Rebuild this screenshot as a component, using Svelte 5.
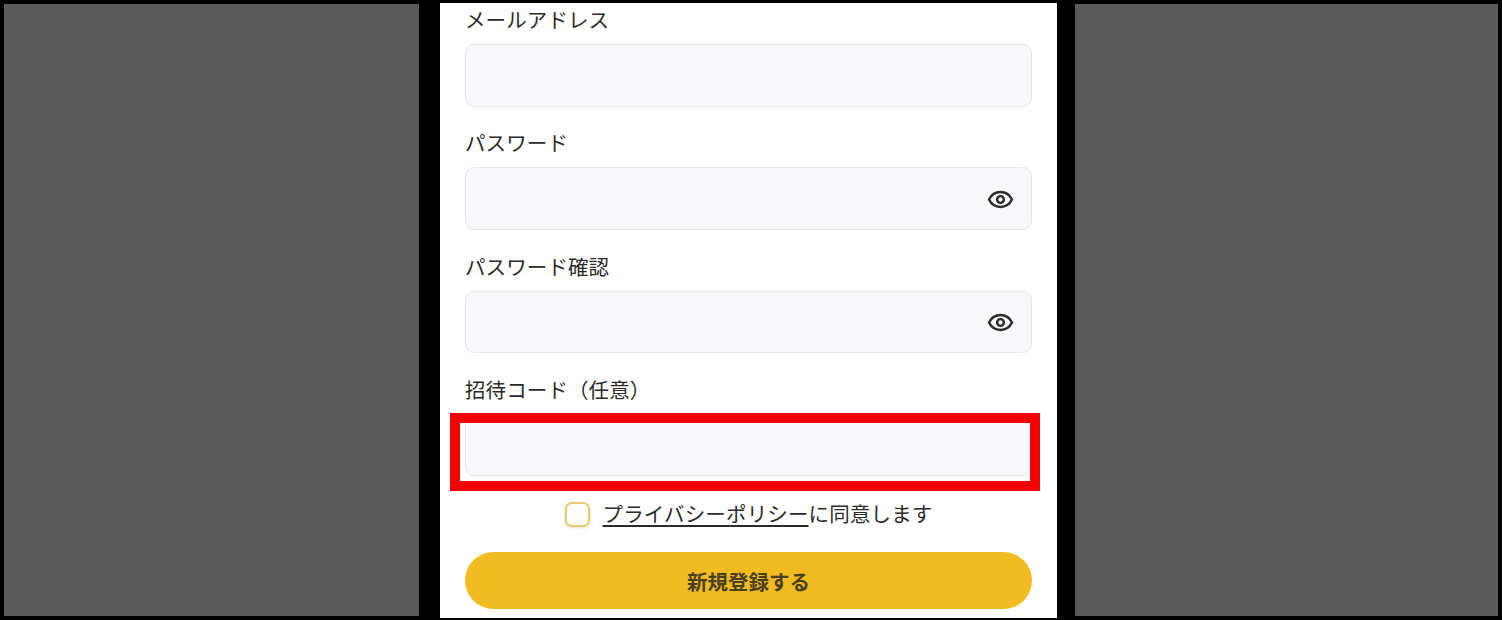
<script>
  const fields = [
    { label: "メールアドレス", eye: false },
    { label: "パスワード", eye: true },
    { label: "パスワード確認", eye: true },
    { label: "招待コード（任意）", eye: false, marked: true },
  ];
</script>

<div class="page">
  <div class="side left"></div>
  <main class="form">
    {#each fields as field}
      <div class="field">
        <div class="label">{field.label}</div>
        <div class="input">
          {#if field.eye}
            <svg class="eye" width="27" height="27" viewBox="0 0 24 24" fill="none" stroke="currentColor" stroke-width="2.2">
              <path d="M1.8 12C4 7.6 7.6 5.4 12 5.4s8 2.2 10.2 6.6c-2.2 4.4-5.8 6.6-10.2 6.6S4 16.4 1.8 12Z" />
              <circle cx="12" cy="12" r="3" />
            </svg>
          {/if}
          {#if field.marked}
            <div class="highlight"></div>
          {/if}
        </div>
      </div>
    {/each}
    <div class="agree">
      <span class="check"></span>
      <span class="agree-text"><span class="link">プライバシーポリシー</span>に同意します</span>
    </div>
    <button class="submit">新規登録する</button>
  </main>
  <div class="side right"></div>
</div>

<style>
  :global(body) {
    margin: 0;
    background: #000;
  }

  .page {
    display: flex;
    width: 1502px;
    height: 620px;
    overflow: hidden;
    background: #000;
    font-family: "Noto Sans CJK JP", "Noto Sans", sans-serif;
    color: #2b2b2b;
  }

  .side {
    background: #5a5a5a;
    height: 612px;
    margin-top: 4px;
  }

  .left {
    width: 415px;
    margin-left: 4px;
  }

  .right {
    width: 423px;
    margin-left: 18px;
  }

  .form {
    box-sizing: border-box;
    width: 617px;
    height: 615px;
    margin: 3px 0 0 21px;
    padding: 0 25px;
    background: #fff;
    display: flex;
    flex-direction: column;
  }

  .field {
    display: flex;
    flex-direction: column;
    margin-bottom: 19.83px;
  }

  .label {
    height: 34px;
    line-height: 33px;
    margin-bottom: 7px;
    font-size: 20.5px;
    letter-spacing: 0.1px;
  }

  .input {
    position: relative;
    box-sizing: border-box;
    height: 62.5px;
    display: flex;
    align-items: center;
    justify-content: flex-end;
    padding-right: 17px;
    background: #f8f8fa;
    border: 1px solid #e6e6ea;
    border-radius: 9px;
  }

  .eye {
    margin-top: 1px;
    color: #2b2b2b;
  }

  .highlight {
    position: absolute;
    top: -2px;
    right: -9px;
    bottom: -15.5px;
    left: -16px;
    box-sizing: border-box;
    border: 10px solid #f30000;
  }

  .agree {
    display: flex;
    align-items: center;
    justify-content: center;
    gap: 13px;
    margin-top: 5px;
    height: 26px;
    font-size: 20.5px;
    letter-spacing: 0.15px;
  }

  .check {
    box-sizing: border-box;
    width: 25px;
    height: 25px;
    background: #fff;
    border: 2px solid #eccb6c;
    border-radius: 7px;
    box-shadow: 0 1px 3px rgba(0, 0, 0, 0.15);
  }

  .agree-text {
    margin-top: -2px;
  }

  .link {
    text-decoration: underline;
    text-underline-offset: 3px;
  }

  .submit {
    margin-top: 25px;
    height: 57px;
    border: none;
    border-radius: 29px;
    background: #f2bc20;
    color: #4a3f1f;
    font-family: inherit;
    font-size: 20.5px;
    font-weight: 700;
    padding: 0;
  }
</style>
